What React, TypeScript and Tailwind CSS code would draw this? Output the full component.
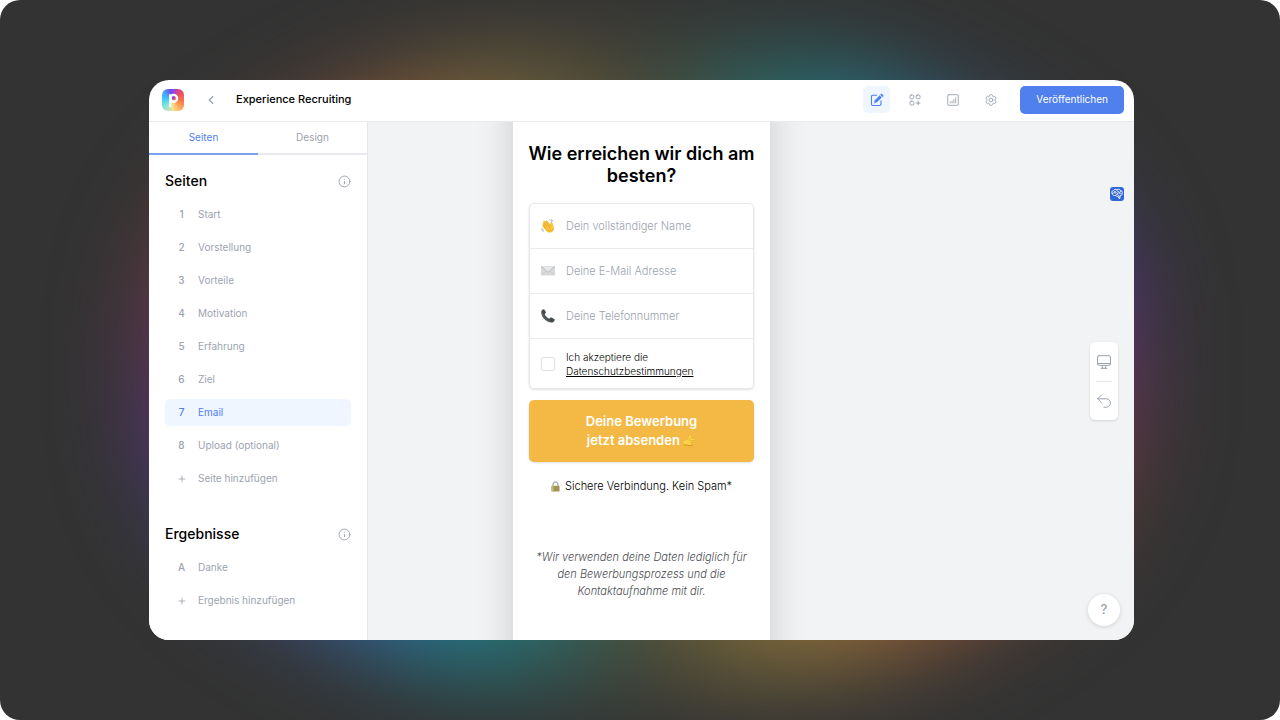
import { useState, type ReactNode } from "react";
import { ChevronLeft, Info, Plus } from "lucide-react";
import clsx from "clsx";

const pages = [
  "Start",
  "Vorstellung",
  "Vorteile",
  "Motivation",
  "Erfahrung",
  "Ziel",
  "Email",
  "Upload (optional)",
];

function Logo() {
  return (
    <div className="grid size-[22px] place-items-center overflow-hidden rounded-[6px] bg-[conic-gradient(from_0deg,#9a40ee,#ee4a63_45deg,#f5744b_90deg,#fba65a_135deg,#fbe08a_180deg,#8fe6d8_225deg,#43d3f5_270deg,#4b9cf7_315deg,#6a4cf0_345deg,#9a40ee)]">
      <svg viewBox="0 0 22 22" className="size-[22px]" fill="none" stroke="#fff" strokeWidth="2.4">
        <path d="M8.300 18V5.200" />
        <circle cx="11.700" cy="9.300" r="3.400" />
      </svg>
    </div>
  );
}

function EditIcon() {
  return (
    <svg viewBox="0 0 14 14" className="size-[14px]" fill="none" stroke="currentColor" strokeLinecap="round" strokeLinejoin="round">
      <path d="M6.6 2.3H2.7a1.2 1.2 0 0 0-1.2 1.2v7.8a1.2 1.2 0 0 0 1.2 1.2h7.1a1.2 1.2 0 0 0 1.2-1.2V7.8" strokeWidth="1.1" />
      <path d="M4.4 9.8l.7-2.500 4.700-4.700 1.800 1.800-4.700 4.700z" fill="currentColor" strokeWidth=".5" />
      <path d="M11.400 1.600l1.200 1.200" strokeWidth="1.900" />
    </svg>
  );
}

function AppsIcon() {
  return (
    <svg viewBox="0 0 12 12" className="size-3" fill="none" stroke="currentColor" strokeLinecap="round">
      <rect x="1" y="1" width="3.800" height="3.800" rx="1.200" />
      <rect x="7.200" y="1" width="3.800" height="3.800" rx="1.200" />
      <rect x="1" y="7.200" width="3.800" height="3.800" rx="1.200" />
      <path d="M9.100 7.200v3.800M7.200 9.100H11" />
    </svg>
  );
}

function ChartIcon() {
  return (
    <svg viewBox="0 0 12 12" className="size-3" fill="none" stroke="currentColor" strokeLinecap="round" strokeWidth=".9">
      <rect x=".7" y=".7" width="10.600" height="10.600" rx="1.200" />
      <path d="M3.300 9V8M5.100 9V7M6.900 9V5.600M8.700 9V3.800" />
    </svg>
  );
}

function GearIcon() {
  return (
    <svg viewBox="0 0 24 24" className="size-[14px]" fill="none" stroke="currentColor" strokeWidth="1.6" strokeLinecap="round" strokeLinejoin="round">
      <path d="M9.6 3.9c.1-.5.6-.9 1.1-.9h2.6c.5 0 1 .4 1.1.9l.2 1.3c.1.4.3.7.6.9l.3.1c.3.2.7.2 1.1.1l1.2-.5c.5-.2 1.1 0 1.4.5l1.3 2.2c.3.5.2 1.1-.3 1.4l-1 .8c-.3.3-.4.7-.4 1v.5c0 .4.1.8.4 1l1 .9c.4.3.5.9.3 1.4l-1.3 2.2c-.3.5-.9.7-1.4.5l-1.2-.5c-.4-.1-.8-.1-1.1.1l-.3.1c-.3.2-.5.5-.6.9l-.2 1.3c-.1.5-.6.9-1.1.9h-2.6c-.5 0-1-.4-1.1-.9l-.2-1.3c-.1-.4-.3-.7-.6-.9l-.3-.1c-.3-.2-.7-.2-1.1-.1l-1.2.5c-.5.2-1.1 0-1.4-.5l-1.3-2.2c-.3-.5-.2-1.1.3-1.4l1-.9c.3-.2.4-.6.4-1v-.5c0-.3-.1-.7-.4-1l-1-.8c-.5-.3-.6-.9-.3-1.4l1.3-2.2c.3-.5.9-.7 1.4-.5l1.2.5c.4.1.8.1 1.1-.1l.3-.1c.3-.2.5-.5.6-.9z" />
      <circle cx="12" cy="12" r="3.2" />
    </svg>
  );
}

function WaveIcon() {
  return (
    <svg viewBox="0 0 16 16" className="size-4">
      <path d="M2.200 5.200c.4-.5 1-.4 1.400.1l2.600 3L2.900 4c-.4-.6-.2-1.200.3-1.500.5-.4 1.100-.2 1.500.3l3.100 3.900L5.500 3.500c-.4-.6-.2-1.200.3-1.500.5-.3 1-.1 1.400.4l3.600 4.700c.2-1.200-.2-2.700.7-3.300.7-.4 1.300.2 1.500 1.100l1.200 4.400c.6 2.300 0 4.200-1.900 5.300-2.200 1.200-4.700.8-6.300-1.200L2.200 8.600c-.4-.6-.3-1.200.2-1.500l2.400 2.700-2.600-3.200c-.4-.5-.3-1.100 0-1.400z" fill="#fbc638" stroke="#f2b12c" strokeWidth=".5" />
      <path d="M3.700 4.700l3.200 4M5.700 3.500l3.300 4.300M3 7.300l2.500 3.200" stroke="#e29a25" strokeWidth=".7" strokeLinecap="round" fill="none" />
      <path d="M10.800 7.100c-1.400.9-1.700 2.200-1 3.600M13.900 11.300c-.7 1.900-3.300 3.100-5.800 1.900" stroke="#e79b22" strokeWidth=".8" strokeLinecap="round" fill="none" />
      <path d="M10 1.200c1 .1 1.700.6 2.100 1.400M11.800.700c.8.300 1.400.9 1.700 1.600M1.200 10.700c.3 1 .9 1.600 1.800 1.900M.9 12.500c.3.800.8 1.300 1.500 1.600" stroke="#8b949c" strokeWidth=".8" strokeLinecap="round" fill="none" />
    </svg>
  );
}

function MailIcon() {
  return (
    <svg viewBox="0 0 14 10" className="h-[10px] w-[14px]">
      <rect width="14" height="9.600" rx=".8" fill="#d8d9da" />
      <path d="M.4 9.200l5-4.600M13.600 9.200l-5-4.600" stroke="#c6c8ca" strokeWidth=".7" />
      <path d="M.4.500l5.800 5.200c.5.400 1.100.400 1.600 0L13.600.500" fill="#e6e7e8" stroke="#b1b3b6" strokeWidth=".8" />
    </svg>
  );
}

function PhoneIcon() {
  return (
    <svg viewBox="0 0 14 14" className="size-[14px]">
      <path d="M.3 2.600C.5 1.500 1.500.300 2.600.200c.4 0 .7.200.9.500l1.300 2.200c.3.500.2 1-.3 1.400l-.7.600c-.2.200-.2.500 0 .8 1 1.600 2.300 2.900 3.900 3.900.3.200.6.200.8 0l.6-.7c.4-.5.900-.6 1.400-.3l2.600 1.300c.5.300.7.600.6 1.100-.3 1.500-1.800 2.800-3.500 2.600C5.400 13 .8 8.500.3 4.300z" fill="#454a4d" />
      <path d="M1.100 3.800c.7 3.600 4.300 7.500 8.200 8.700" stroke="#7b8184" strokeWidth=".6" fill="none" />
    </svg>
  );
}

function ThumbIcon() {
  return (
    <svg viewBox="0 0 14 14" className="inline size-[13px] align-[-2px]">
      <path d="M.8 7.300h2.400C4.600 6.500 5.500 5.400 6.100 4L6.700 1.600c.2-.8 1.700-.8 1.900.5.2 1-.1 2.200-.6 3.400h4c1.300 0 1.400 1.600.5 1.900.7.400.6 1.600-.2 1.900.5.500.3 1.400-.4 1.700.3.800-.1 1.500-1 1.500H6.700c-1.200 0-2.100-.5-3.200-.8H.8z" fill="#ffd348" />
      <path d="M8.700 7.400h3.600M8.700 9.300h3.400M8.700 11h2.900M6.900 5.600c-.3.700-.2 1.300.2 1.800" stroke="#d08a18" strokeWidth=".6" fill="none" strokeLinecap="round" />
      <path d="M.8 11.700h2.700c1.100.3 2 .8 3.200.8h4.200" stroke="#c67c12" strokeWidth=".7" fill="none" />
    </svg>
  );
}

function LockIcon() {
  return (
    <svg viewBox="0 0 9 11" className="mr-0.5 inline h-[11px] w-[9px] align-[-2px]">
      <path d="M2 5.500V3.400a2.500 2.500 0 0 1 5 0v2.100" fill="none" stroke="#a3abb0" strokeWidth="1.200" />
      <rect x=".5" y="4.800" width="8" height="5.800" rx=".7" fill="#a79d57" />
      <path d="M.7 6.300h7.600M.7 7.800h7.600M.7 9.300h7.600" stroke="#8b8243" strokeWidth=".5" />
      <rect x=".5" y="4.800" width="2" height="5.800" rx=".7" fill="#c4bb7c" />
    </svg>
  );
}

function BrainIcon() {
  return (
    <svg viewBox="0 0 14 14" className="size-[14px]" fill="none" stroke="#fff" strokeWidth=".9" strokeLinecap="round" strokeLinejoin="round">
      <path d="M2.200 6.600c-.9-1.300-.2-2.800 1.200-3 .7-1.300 2.200-1.700 3.400-1 1.300-.8 3-.4 3.500.8 1.500.1 2.300 1.400 1.800 2.700.5 1.300-.4 2.400-1.800 2.400L9.600 12 7.800 9.300c-1 .2-1.800-.2-2.200-.9-1.700.4-3.200-.3-3.400-1.800z" />
      <path d="M2.800 6.200c1-.9 2.200-.9 3 0M4.300 4.300c1 0 1.700.4 2 1.200M6.800 3.300c.2.900.9 1.300 1.900 1.200M7.200 6.500c.9-.9 2.500-.9 3.300.1M5.600 8.300c.4-.9 1.300-1.200 2.300-.8M9.500 5.600c.7-.1 1.200-.5 1.300-1.200M8.800 8.500l.5 1.500" />
    </svg>
  );
}

function DesktopIcon() {
  return (
    <svg viewBox="0 0 14 14" className="size-[14px]" fill="none" stroke="currentColor" strokeLinecap="round">
      <rect x=".6" y=".7" width="12.800" height="9.600" rx="1.300" />
      <path d="M.6 8.500h12.800M5.300 10.500v2.600M8.700 10.500v2.600M4 13.300h6" />
    </svg>
  );
}

function UndoIcon() {
  return (
    <svg viewBox="0 0 14 14" className="size-[14px]" fill="none" stroke="currentColor" strokeLinecap="round" strokeLinejoin="round">
      <path d="M4.600.800L.600 4.800l4 4" />
      <path d="M.6 4.800h8.600a4.200 4.200 0 0 1 0 8.400H6.800" />
    </svg>
  );
}

function SectionTitle({ children }: { children: ReactNode }) {
  return (
    <div className="flex h-5 items-center justify-between">
      <h2 className="text-[14px] leading-5 font-medium text-black">{children}</h2>
      <button type="button" aria-label="Info" className="text-[#9ca3af]">
        <Info size={13} strokeWidth={1.8} />
      </button>
    </div>
  );
}

interface PageItemProps {
  marker: ReactNode;
  label: string;
  active?: boolean;
  onClick?: () => void;
}

function PageItem({ marker, label, active, onClick }: PageItemProps) {
  return (
    <li>
      <button
        type="button"
        onClick={onClick}
        className={clsx(
          "flex h-[27px] w-full items-center rounded-[5px] text-left text-[10px]",
          active ? "bg-[#eff6ff] text-[#4f80ee]" : "text-[#9ca3af]"
        )}
      >
        <span className="flex w-[33px] justify-center font-medium">{marker}</span>
        <span>{label}</span>
      </button>
    </li>
  );
}

interface FieldProps {
  id: string;
  type: string;
  placeholder: string;
  icon: ReactNode;
}

function Field({ id, type, placeholder, icon }: FieldProps) {
  return (
    <div className="flex h-[45px] items-center gap-[11px] border-b border-[#e9eaed] px-[11px]">
      <label htmlFor={id} aria-label={placeholder} className="flex w-[14px] justify-center">
        {icon}
      </label>
      <input
        id={id}
        type={type}
        placeholder={placeholder}
        className="min-w-0 flex-1 text-[11px] font-light text-gray-900 outline-none placeholder:text-[#9ca3af]"
      />
    </div>
  );
}

export default function App() {
  const [activePage, setActivePage] = useState(6);
  const [tab, setTab] = useState("Seiten");

  const plus = <Plus size={10} strokeWidth={2} />;

  return (
    <div className="bg-white font-[Inter,'Liberation_Sans',sans-serif]">
      <div className="grid min-h-screen overflow-hidden rounded-[20px] bg-[#333333] py-20 pr-[146px] pl-[149px]">
        {/* colored glow behind the window */}
        <div className="col-start-1 row-start-1 -mt-7 -mb-11 rounded-[44%] bg-[conic-gradient(from_0deg,#4a4a38,#277070_30deg,#267c88_38deg,#2f6080_52deg,#43488c_68deg,#5a358c_80deg,#6c3560_92deg,#7a3f3c_106deg,#9a6038_130deg,#8a733c_148deg,#4a4a38_180deg,#277070_205deg,#1f8290_216deg,#3a62a0_232deg,#47488c_250deg,#5a358c_260deg,#6c3560_272deg,#7a3f3c_288deg,#8a5638_310deg,#7c683c_328deg,#4a4a38)] blur-[46px]" />

        <div className="z-10 col-start-1 row-start-1 flex flex-col overflow-hidden rounded-[20px] bg-white">
          <header className="flex h-[42px] items-center border-b border-[#e9eaed] pr-[10px] pb-[2px] pl-[13px]">
            <Logo />
            <button type="button" aria-label="Zurück" className="ml-5 text-[#9ca3af]">
              <ChevronLeft size={14} strokeWidth={2} />
            </button>
            <h1 className="ml-[18px] text-[11px] font-medium text-black">Experience Recruiting</h1>

            <nav className="ml-auto flex items-center gap-[11px] text-[#9ca3af]">
              <button
                type="button"
                aria-label="Bearbeiten"
                className="grid size-[27px] place-items-center rounded-[5px] bg-[#eff6ff] text-[#4f80ee]"
              >
                <EditIcon />
              </button>
              <button type="button" aria-label="Apps" className="grid size-[27px] place-items-center">
                <AppsIcon />
              </button>
              <button type="button" aria-label="Statistik" className="grid size-[27px] place-items-center">
                <ChartIcon />
              </button>
              <button type="button" aria-label="Einstellungen" className="grid size-[27px] place-items-center">
                <GearIcon />
              </button>
            </nav>
            <button
              type="button"
              className="ml-4 h-7 rounded-[5px] bg-[#4f80ee] px-4 text-[10px] text-white"
            >
              Veröffentlichen
            </button>
          </header>

          <div className="flex flex-1">
            <aside className="w-[219px] border-r border-[#e5e7eb] bg-white">
              <div className="flex">
                {["Seiten", "Design"].map((name) => (
                  <button
                    key={name}
                    type="button"
                    onClick={() => setTab(name)}
                    className={clsx(
                      "h-[33px] flex-1 border-b-2 text-[10px]",
                      tab === name
                        ? "border-[#7ba0f3] text-[#4f80ee]"
                        : "border-[#e9eaed] text-[#9ca3af]"
                    )}
                  >
                    {name}
                  </button>
                ))}
              </div>

              <div className="px-4 pt-4 pb-6">
                <SectionTitle>Seiten</SectionTitle>
                <ul className="mt-[10px] space-y-[6px]">
                  {pages.map((page, index) => (
                    <PageItem
                      key={page}
                      marker={index + 1}
                      label={page}
                      active={index === activePage}
                      onClick={() => setActivePage(index)}
                    />
                  ))}
                  <PageItem marker={plus} label="Seite hinzufügen" />
                </ul>

                <div className="mt-8">
                  <SectionTitle>Ergebnisse</SectionTitle>
                </div>
                <ul className="mt-[10px] space-y-[6px]">
                  <PageItem marker="A" label="Danke" />
                  <PageItem marker={plus} label="Ergebnis hinzufügen" />
                </ul>
              </div>
            </aside>

            <main className="flex flex-1 overflow-hidden bg-[#f2f3f5]">
              <div className="flex flex-1 justify-center">
                <section className="-my-10 w-[257px] bg-white px-4 pt-[61px] pb-[70px] text-center shadow-[0_0_36px_rgba(0,0,0,0.16)]">
                  <h2 className="-mx-2 text-[18px] leading-[22px] font-semibold text-black">
                    Wie erreichen wir dich am besten?
                  </h2>

                  <form onSubmit={(e) => e.preventDefault()}>
                    <div className="mt-4 rounded-[5px] border border-[#e5e7eb] text-left shadow-sm">
                      <Field id="name" type="text" placeholder="Dein vollständiger Name" icon={<WaveIcon />} />
                      <Field id="email" type="email" placeholder="Deine E-Mail Adresse" icon={<MailIcon />} />
                      <Field id="phone" type="tel" placeholder="Deine Telefonnummer" icon={<PhoneIcon />} />
                      <div className="flex h-[49px] items-center gap-[11px] px-[11px]">
                        <input
                          id="privacy"
                          type="checkbox"
                          className="size-[14px] appearance-none rounded-[2px] border border-[#dfe1e6] bg-white checked:bg-[#4f80ee]"
                        />
                        <label htmlFor="privacy" className="text-[10px] leading-[14px] font-light text-black">
                          Ich akzeptiere die
                          <br />
                          <a href="#datenschutz" className="underline">
                            Datenschutzbestimmungen
                          </a>
                        </label>
                      </div>
                    </div>

                    <button
                      type="submit"
                      className="mt-[11px] w-full rounded-[5px] bg-[#f4b944] py-3 text-[13px] leading-[19px] font-semibold text-white shadow-sm"
                    >
                      Deine Bewerbung
                      <br />
                      jetzt absenden <ThumbIcon />
                    </button>
                  </form>

                  <p className="mt-4 text-[11px] leading-4 font-light text-black">
                    <LockIcon /> Sichere Verbindung. Kein Spam*
                  </p>
                  <p className="mt-[55px] text-[11px] leading-[17px] font-light text-[#4b4d52] italic">
                    *Wir verwenden deine Daten lediglich für den Bewerbungsprozess und die
                    Kontaktaufnahme mit dir.
                  </p>
                </section>
              </div>

              <div className="flex w-[219px] flex-col items-end pt-[65px] pb-[14px] text-[#9ca3af]">
                <button
                  type="button"
                  aria-label="Feedback"
                  className="mr-[10px] grid size-[14px] place-items-center rounded-[3px] bg-[#2f66d8]"
                >
                  <BrainIcon />
                </button>
                <div className="mt-[141px] mr-4 flex w-7 flex-col items-center rounded-[5px] bg-white shadow-sm">
                  <button type="button" aria-label="Desktop-Ansicht" className="grid h-[39px] w-full place-items-center">
                    <DesktopIcon />
                  </button>
                  <hr className="w-4 border-[#e5e7eb]" />
                  <button type="button" aria-label="Rückgängig" className="grid h-[38px] w-full place-items-center">
                    <UndoIcon />
                  </button>
                </div>
                <button
                  type="button"
                  aria-label="Hilfe"
                  className="mt-auto mr-[14px] size-8 rounded-full bg-white text-[13px] font-medium shadow-[0_1px_4px_rgba(0,0,0,0.15)]"
                >
                  ?
                </button>
              </div>
            </main>
          </div>
        </div>
      </div>
    </div>
  );
}
